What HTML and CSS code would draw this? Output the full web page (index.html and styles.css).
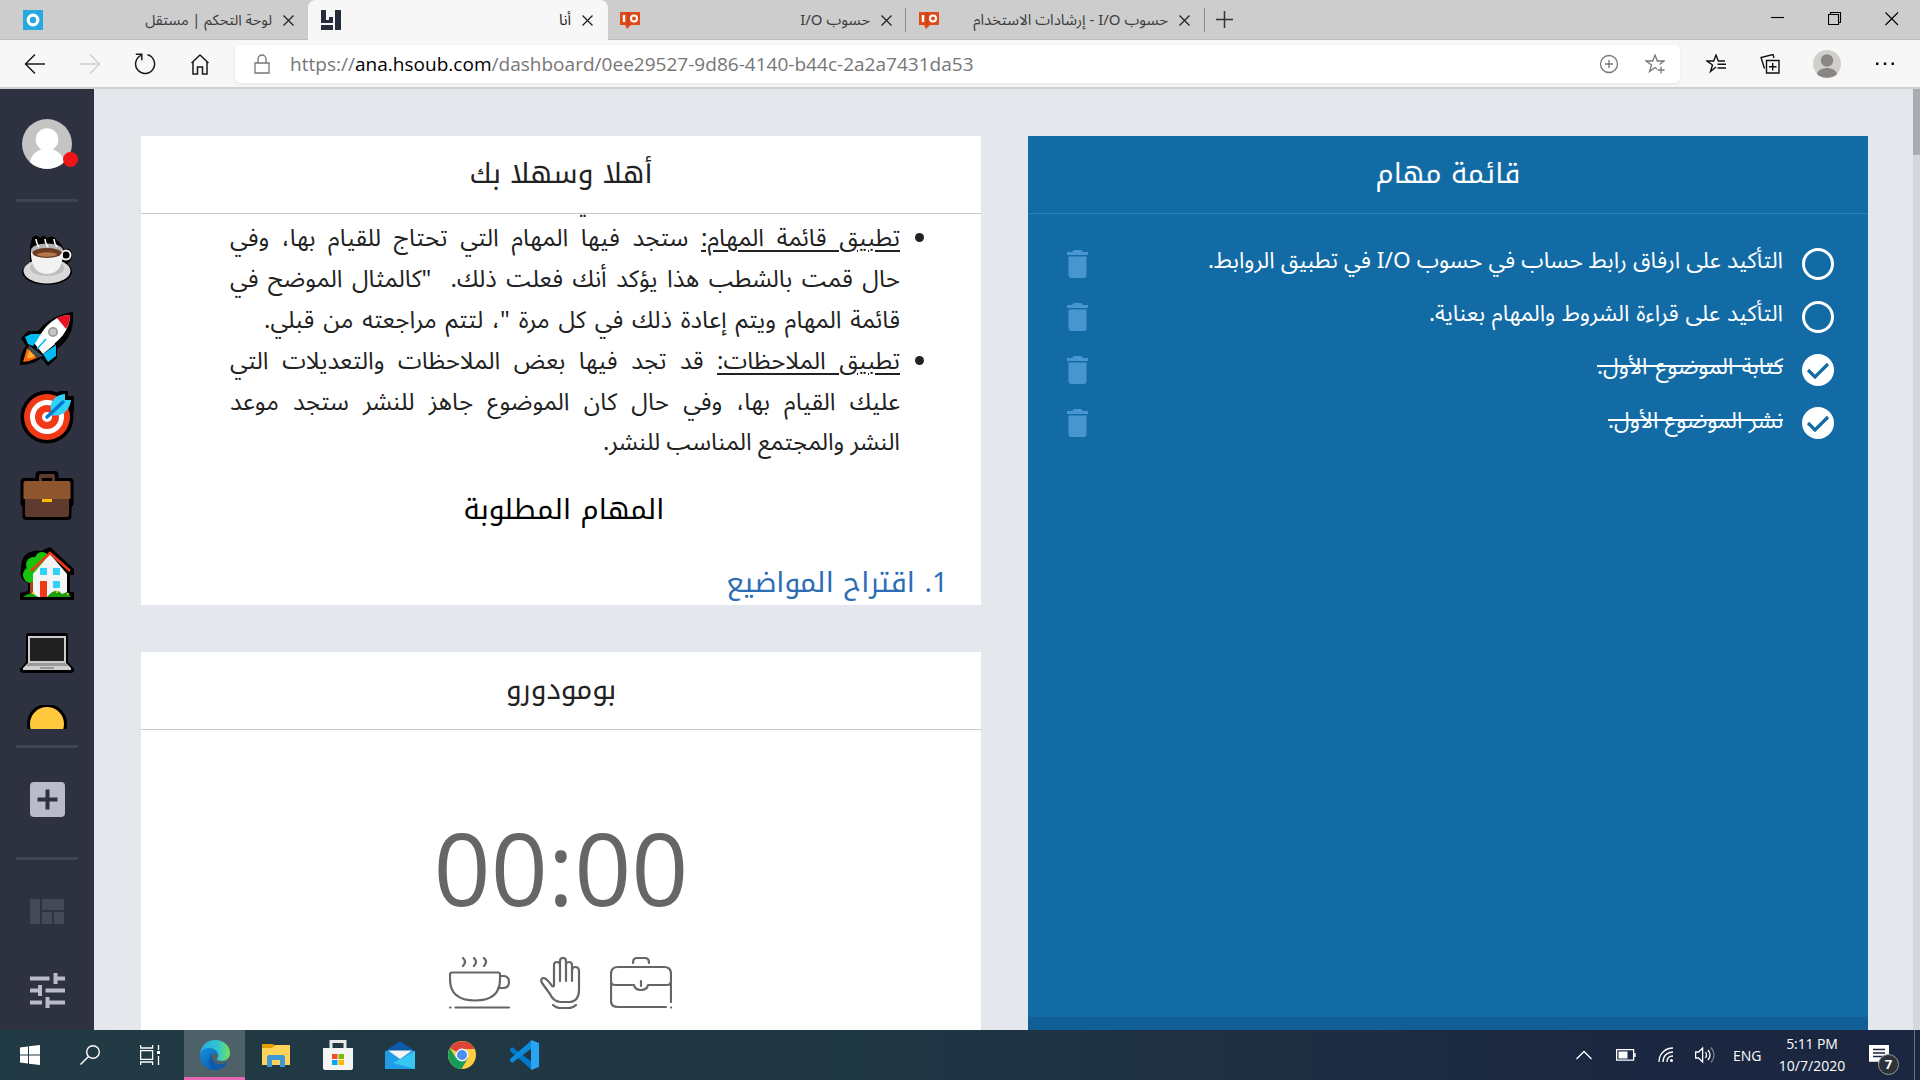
FILE: index.html
```html
<!DOCTYPE html>
<html lang="ar">
<head>
<meta charset="utf-8">
<title>أنا</title>
<link rel="stylesheet" href="styles.css">
</head>
<body>
<div class="screen">
  <header class="tabs">
    <div class="tab tab-first">
      <svg class="fav" viewBox="0 0 20 20"><path fill="#29a8e0" d="M0 0h20v20H0z"/><circle cx="10" cy="10" r="4.8" fill="none" stroke="#fff" stroke-width="3.2"/></svg>
      <span class="tab-title" dir="rtl">لوحة التحكم | مستقل</span>
      <svg class="x" viewBox="0 0 11 11"><path d="M.5.5l10 10M10.5.5l-10 10"/></svg>
    </div>
    <div class="tab tab-active">
      <svg class="fav" viewBox="0 0 20 20"><path fill="#272c3d" d="M0 0h5v13H0zM8 7h4v6H8zM0 10h8v3H0zM0 15h12v5H0zM14 0h6v20h-6z"/></svg>
      <span class="tab-title" dir="rtl">أنا</span>
      <svg class="x" viewBox="0 0 11 11"><path d="M.5.5l10 10M10.5.5l-10 10"/></svg>
    </div>
    <div class="tab tab-third">
      <svg class="fav" viewBox="0 0 20 20"><path fill="#df4a1b" d="M0 2h20v13h-9l-4 4-2-4H0z"/><path d="M4 5v7" stroke="#fff" stroke-width="2.4"/><path d="M8 2v13" stroke="#b93a12"/><circle cx="14" cy="8.5" r="3" fill="none" stroke="#fff" stroke-width="2"/></svg>
      <span class="tab-title" dir="rtl">حسوب I/O</span>
      <svg class="x" viewBox="0 0 11 11"><path d="M.5.5l10 10M10.5.5l-10 10"/></svg>
    </div>
    <div class="tab tab-fourth">
      <svg class="fav" viewBox="0 0 20 20"><path fill="#df4a1b" d="M0 2h20v13h-9l-4 4-2-4H0z"/><path d="M4 5v7" stroke="#fff" stroke-width="2.4"/><path d="M8 2v13" stroke="#b93a12"/><circle cx="14" cy="8.5" r="3" fill="none" stroke="#fff" stroke-width="2"/></svg>
      <span class="tab-title" dir="rtl">حسوب I/O - إرشادات الاستخدام</span>
      <svg class="x" viewBox="0 0 11 11"><path d="M.5.5l10 10M10.5.5l-10 10"/></svg>
    </div>
    <svg class="plus" viewBox="0 0 17 17"><path d="M8.5 0v17M0 8.5h17"/></svg>
    <div class="window-buttons">
      <svg viewBox="0 0 14 14"><path d="M0 5.5h13"/></svg>
      <svg viewBox="0 0 14 14"><path d="M.5 2.5h10v10H.5zM2.5 2.5v-2h10v10h-2"/></svg>
      <svg viewBox="0 0 14 14"><path d="M.5.5l12.5 12.5M13 .5L.5 13"/></svg>
    </div>
  </header>

  <div class="toolbar">
    <nav class="nav">
      <svg viewBox="0 0 22 22"><path d="M21 11H1.500M11 1.500L1.500 11 11 20.500"/></svg>
      <svg class="faded" viewBox="0 0 22 22"><path d="M1 11h19.500M11 1.500l9.500 9.500L11 20.500"/></svg>
      <svg viewBox="0 0 22 22"><path d="M13.500 1.800A9.500 9.500 0 1 1 7 2.400M1.800 1.200h6v6"/></svg>
      <svg viewBox="0 0 22 22"><path d="M2.500 10L11 2l8.500 8M4 9v12h4.500v-7h5v7H18V9"/></svg>
    </nav>
    <div class="address">
      <svg class="lock" viewBox="0 0 16 20"><path d="M1 9h14v10H1zM4 9V5a4 4 0 0 1 8 0v4"/></svg>
      <span class="url">https://<b>ana.hsoub.com</b>/dashboard/0ee29527-9d86-4140-b44c-2a2a7431da53</span>
      <svg class="addr-icon" viewBox="0 0 20 20"><circle cx="10" cy="10" r="8.500"/><path d="M10 6v8M6 10h8"/></svg>
      <svg class="addr-icon" viewBox="0 0 20 20"><path d="M12 15l-2-1.500-5.500 4 2-6.500L1 7h6.700L10 1l2.300 6H19l-4.500 3.500M16 12.500v7M12.500 16h7"/></svg>
    </div>
    <div class="actions">
      <svg viewBox="0 0 20 20"><path d="M10 13l-5.500 4.500 2-6.500L1 7h6.700L10 1l2.300 6H19M11.500 10.300H20M11.500 14H20"/></svg>
      <svg viewBox="0 0 20 20"><path d="M6.500 6.500h12.500v12.500H6.500zM12.700 9v7.500M9 12.700h7.500M4.500 14.500L1 3.500l12-3 1 3.500"/></svg>
      <svg class="person" viewBox="0 0 28 28"><circle cx="14" cy="14" r="14" fill="#d1cfcc"/><circle cx="14" cy="10.500" r="6.200" fill="#8a8683"/><path d="M4 24c2-8 18-8 20 0-4 5-16 5-20 0z" fill="#8a8683"/></svg>
      <svg viewBox="0 0 20 20"><path fill="#111" stroke="none" d="M1 8.500h2.500V11H1zM8.800 8.500h2.500V11H8.800zM16.500 8.500H19V11h-2.500z"/></svg>
    </div>
  </div>

  <div class="page">
    <aside class="side">
      <div class="user">
        <svg viewBox="0 0 50 50"><circle cx="25" cy="25" r="25" fill="#c4c4c4"/><circle cx="25" cy="20.500" r="11.300" fill="#fff"/><path d="M8 43c3-18 31-18 34 0-8 9-26 9-34 0z" fill="#fff"/></svg>
        <i class="status"></i>
      </div>
      <hr>
      <div class="boards">
        <svg viewBox="0 0 54 54"><path d="M12 5q4-5 8 0 4-4 7 0 5-3 8 0 5 4 9 11 9-2 8 7-1 5-5 8 5 3 5 8c-2 17-48 17-50 0q0-5 8-9V14z" fill="#000"/><ellipse cx="27" cy="38" rx="23.500" ry="12.500" fill="#d9d9d9"/><ellipse cx="27" cy="35" rx="17" ry="8" fill="#bfbfbf"/><circle cx="46" cy="22" r="4.500" fill="none" stroke="#eee" stroke-width="2"/><path d="M11 17q-1 23 16 24 17-1 16-24z" fill="#f2f2f2"/><ellipse cx="27" cy="17.500" rx="16" ry="7" fill="#b5b5b5"/><ellipse cx="27" cy="20" rx="14.500" ry="5" fill="#6b3d25"/><ellipse cx="27" cy="21.500" rx="10" ry="2.200" fill="#b5774b"/><path d="M16 6q0 4 3 8M25 6q0 4 3 8M34 6q0 4 3 8" stroke="#fff" stroke-width="1.600" fill="none"/></svg>
        <svg viewBox="0 0 54 54"><path d="M53 0q1 15-4 24-5 8-12 13v9l-9 8-7-8q-7 7-21 7 0-12 6-19l-5-8 7-7h10Q31 3 53 0z" fill="#000"/><path d="M25 18L14 31l9 11 12-10z" fill="#fff"/><path d="M5 25l6-3h11l-9 12-5-2zM36 33v11l-8 6-5-8z" fill="#00bcf2"/><path d="M16 31C23 15 35 3 50 3c0 15-10 26-26 36z" fill="#fff"/><path d="M37 6q5-3 13-3 0 8-4 14z" fill="#e81123"/><circle cx="33" cy="20" r="5" fill="#999"/><circle cx="33" cy="20" r="3.300" fill="#c6c6c6"/><path d="M9 33l14 11-6 2-9-9z" fill="#3e4b4e"/><path d="M7 36L3 50q8-1 14-4z" fill="#f7630c"/><path d="M9 38l6 6q-3 3-8 2z" fill="#ffb02e"/><path d="M26 27L17 37" stroke="#00bcf2" stroke-width="1.600"/></svg>
        <svg viewBox="0 0 54 54"><circle cx="27" cy="27" r="26.500" fill="#000"/><path d="M28 8l12-7h8v5h6v16L40 29z" fill="#000"/><circle cx="27" cy="27" r="23" fill="#f03a17"/><circle cx="27" cy="27" r="14.500" fill="none" stroke="#fff" stroke-width="5"/><circle cx="27" cy="27" r="5" fill="#fff"/><path d="M31 22c-2-12 5-17 14-18v6h6c-1 8-7 18-20 15z" fill="#31d2f7"/><path d="M43 12L27 27" stroke="#0078d7" stroke-width="3.500" stroke-linecap="round"/></svg>
        <svg viewBox="0 0 54 54"><rect x="15.500" y="2" width="23" height="16" rx="4" fill="#000"/><rect x=".5" y="9" width="53" height="29" rx="4" fill="#000"/><rect x="2.500" y="22" width="49" height="29" rx="4" fill="#000"/><path d="M19 12V7q0-2 2-2h12q2 0 2 2v5h-3V9H22v3z" fill="#5f3a2e"/><path d="M5 29h44v17q0 2-2 2H7q-2 0-2-2z" fill="#5f3a2e"/><path d="M3.500 14q0-2 2-2h43q2 0 2 2v16h-47z" fill="#8e562e"/><path d="M22 30h10v3H22z" fill="#ffb900"/></svg>
        <svg viewBox="0 0 54 54"><path d="M30 0l24 22v6h-4v17h4v8H0v-7l8-2V36Q-2 32 1 22 1 2 21 4z" fill="#000"/><g fill="#16c60c"><circle cx="11" cy="28" r="8"/><circle cx="14" cy="18" r="8"/><circle cx="22" cy="12" r="7"/></g><path d="M10 35h5v15h-5z" fill="#a5491d"/><path d="M13 27L30 7l17 20v23H13z" fill="#f4f4f4"/><path d="M11 24L30 6l20 18" stroke="#f03a17" stroke-width="2.500" fill="none"/><path d="M20 21h7v7h-7zM33 21h7v7h-7zM33 34h7v7h-7z" fill="#31d2f7"/><path d="M20 34h7v16h-7z" fill="#f03a17"/><path d="M3 50q8-7 15 0zM27 50q9-11 15-3l5-2 4 5z" fill="#16a00c"/><path d="M12 45h2v2h-2zM36 44h2v2h-2zM47 46h2v2h-2z" fill="#f7b50c"/></svg>
        <svg viewBox="0 0 54 54"><path d="M6 10q0-3 3-3h36q3 0 3 3v26l6 7q1 4-4 4H4q-5 0-4-4l6-7z" fill="#000"/><path d="M8 10h38v27H8z" fill="#ccc"/><path d="M10 12h34v23H10z" fill="#212121"/><path d="M8 37h38l5 5v2H3v-2z" fill="#d0d0d0"/><path d="M9 37h36l3 3H6zM20 41h14v2H20z" fill="#999"/></svg>
        <svg viewBox="0 0 54 54"><circle cx="27" cy="19" r="20" fill="#000"/><circle cx="27" cy="19" r="17" fill="#ffc83d"/></svg>
      </div>
      <hr>
      <svg class="add" viewBox="0 0 35 35"><rect width="35" height="35" rx="4" fill="#b9bcc8"/><path d="M17.500 7.500v20M7.500 17.500h20" stroke="#2d3140" stroke-width="4"/></svg>
      <hr>
      <svg class="layout" viewBox="0 0 34 25"><path fill="#454955" d="M0 0h10v25H0zM12 0h22v11H12zM12 13h10v12H12zM24 13h10v12H24z"/></svg>
      <svg class="sliders" viewBox="0 0 35 35"><path d="M0 5.500h19.500M25.500 0v11M25.500 5.500H35M0 17.500h10M10 12v11M15.500 17.500H35M0 29.500h12M17.500 24v11M17.500 29.500H35" stroke="#b9bcc8" stroke-width="4"/></svg>
    </aside>

    <main class="board">
      <div class="column">
        <section class="card welcome">
          <h2 dir="rtl"><span>أهلا وسهلا بك</span></h2>
          <div class="copy" dir="rtl">
            <p class="above">ي</p>
            <ul>
              <li><p class="row"><u>تطبيق قائمة المهام:</u> ستجد فيها المهام التي تحتاج للقيام بها، وفي</p>
                <p class="row">حال قمت بالشطب هذا يؤكد أنك فعلت ذلك.&nbsp; "كالمثال الموضح في</p>
                <p class="row row-c">قائمة المهام ويتم إعادة ذلك في كل مرة "، لتتم مراجعته من قبلي.</p></li>
              <li><p class="row"><u>تطبيق الملاحظات:</u> قد تجد فيها بعض الملاحظات والتعديلات التي</p>
                <p class="row">عليك القيام بها، وفي حال كان الموضوع جاهز للنشر ستجد موعد</p>
                <p class="row row-f">النشر والمجتمع المناسب للنشر.</p></li>
            </ul>
            <h3>المهام المطلوبة</h3>
            <h4>1. اقتراح المواضيع</h4>
          </div>
        </section>
        <section class="card pomodoro">
          <h2 dir="rtl"><span>بومودورو</span></h2>
          <div class="clock">00:00</div>
          <div class="modes">
            <svg class="mode-wide" viewBox="0 0 62 52"><path d="M3 15.500h46q2 0 2 2v5q0 21-25 21T1 22.500v-5q0-2 2-2zM51 19h3q6 0 6 6t-6 6h-5M14 1q4 4 0 8M25 1q4 4 0 8M35 1q4 4 0 8M6.500 50.500H60M1 50.500h.5"/></svg>
            <svg class="mode-hand" viewBox="0 0 41 52"><path d="M14 24V8q0-3 3-3t3 3V4q0-3 3-3t3 3v3q1-2 3-2 3 0 3 3v5q1-3 3-3 4 0 4 4v19q0 11-9 12H20q-7-1-10-8L2 26q-2-4 1-5 3 0 5 3 3 3 4 5 2 1 2-1V24M20 8v16M26 6v18M32 11v13M13 48q3 3 7 3h9q4 0 7-3"/></svg>
            <svg class="mode-wide" viewBox="0 0 62 52"><path d="M61 45V17q0-7-7-7H8q-7 0-7 7v27q0 6 7 6h48M61 50.500h.2M1 24q0 4 4 4h19q1 5 7 5t7-5h19q4 0 4-4M31 24v5M23 6q0-5 4-5h8q4 0 4 5"/></svg>
          </div>
        </section>
      </div>
      <section class="card tasks">
        <h2 dir="rtl"><span>قائمة مهام</span></h2>
        <ul dir="rtl">
          <li><i class="ring"></i><span class="task t1">التأكيد على ارفاق رابط حساب في حسوب I/O في تطبيق الروابط.</span><svg class="bin" viewBox="0 0 21 28"><path d="M0 2h5l2-2h7l2 2h5v3H0zM1.500 6.500h18V25q0 3-3 3h-12q-3 0-3-3z"/></svg></li>
          <li><i class="ring"></i><span class="task t2">التأكيد على قراءة الشروط والمهام بعناية.</span><svg class="bin" viewBox="0 0 21 28"><path d="M0 2h5l2-2h7l2 2h5v3H0zM1.500 6.500h18V25q0 3-3 3h-12q-3 0-3-3z"/></svg></li>
          <li><svg class="check" viewBox="0 0 32 32"><circle cx="16" cy="16" r="16" fill="#fff"/><path d="M6 16l7 7L26 10" fill="none" stroke="#136ba6" stroke-width="3.200"/></svg><span class="task done t3">كتابة الموضوع الأول.</span><svg class="bin" viewBox="0 0 21 28"><path d="M0 2h5l2-2h7l2 2h5v3H0zM1.500 6.500h18V25q0 3-3 3h-12q-3 0-3-3z"/></svg></li>
          <li><svg class="check" viewBox="0 0 32 32"><circle cx="16" cy="16" r="16" fill="#fff"/><path d="M6 16l7 7L26 10" fill="none" stroke="#136ba6" stroke-width="3.200"/></svg><span class="task done t4">نشر الموضوع الأول.</span><svg class="bin" viewBox="0 0 21 28"><path d="M0 2h5l2-2h7l2 2h5v3H0zM1.500 6.500h18V25q0 3-3 3h-12q-3 0-3-3z"/></svg></li>
        </ul>
        <div class="tasks-foot"></div>
      </section>
    </main>
    <div class="scroll"><i></i></div>
  </div>

  <footer class="taskbar">
    <div class="apps">
      <span><svg width="20" height="20" viewBox="0 0 20 20"><path fill="#fff" d="M0 2.500L8 1.400v8.200H0zM9 1.200L20 0v9.600H9zM0 10.500h8v8L0 17.500zM9 10.500h11V20L9 18.700z"/></svg></span>
      <span><svg width="20" height="20" viewBox="0 0 20 20" fill="none" stroke="#fff" stroke-width="1.400"><circle cx="13" cy="7" r="6.300"/><path d="M8.500 11.500L.5 19.500"/></svg></span>
      <span><svg width="20" height="20" viewBox="0 0 20 20" fill="none" stroke="#fff" stroke-width="1.300"><path d="M.6 0v3h12V0M.6 5.600h12v8.800H.6zM.6 20v-3h12v3M18.500 0v5M18.500 11v9"/><path d="M17 6h3v3h-3z" fill="#fff" stroke="none"/></svg></span>
      <span class="current"><svg width="30" height="30" viewBox="0 0 30 30"><defs><linearGradient id="eg" x1="0" x2="1"><stop stop-color="#2aa9e8"/><stop offset=".6" stop-color="#31c4cf"/><stop offset="1" stop-color="#72e35c"/></linearGradient><linearGradient id="eb" x1="0" y1="0" x2="1" y2="1"><stop stop-color="#1490df"/><stop offset="1" stop-color="#0c4b9c"/></linearGradient></defs><path fill="url(#eg)" d="M0 13C2 4 8 0 15 0c9 0 15 6 15 13 0 5-4 8-8 8-3 0-5-1-5-2s2-2 1-4c-1-3-5-5-9-5s-7 1-9 3z"/><path fill="url(#eb)" d="M0 14c1-4 5-6 9-6 5 0 9 3 9 7-4-3-8 0-7 4 1 5 7 8 16 3-3 6-8 8-13 8C6 30-1 23 0 14z"/><path fill="#0d5bad" d="M12 14c-5 5-3 13 2 16 5 0 10-2 13-7-8 4-16 0-15-9z"/></svg></span>
      <span><svg width="28" height="24" viewBox="0 0 28 24"><path fill="#e19d00" d="M0 1h11l2 2v4H0z"/><path fill="#ffd25a" d="M0 5h10l3-3h15v20H0z"/><path fill="#3f97d8" d="M5 14q0-2 2-2h14q2 0 2 2v10h-5v-7h-8v7H5z"/></svg></span>
      <span><svg width="30" height="30" viewBox="0 0 30 30"><path d="M8 9V1.500h14V9" fill="none" stroke="#e8e8e8" stroke-width="3"/><path fill="#f4f4f4" d="M0 8h30v20q0 2-2 2H2q-2 0-2-2z"/><path fill="#f25022" d="M9 14h5.500v5H9z"/><path fill="#7fba00" d="M15.500 14H21v5h-5.500z"/><path fill="#00a4ef" d="M9 20h5.500v5H9z"/><path fill="#ffb900" d="M15.500 20H21v5h-5.500z"/></svg></span>
      <span><svg width="30" height="28" viewBox="0 0 30 28"><path fill="#0b5aa9" d="M0 10L15 0l15 10v4H0z"/><path fill="#1f9de6" d="M0 10h30v18H0z"/><path fill="#37c5f3" d="M30 10L8 22l22 6z"/><path fill="#f5f5f5" d="M3 9.500h24L15 18z"/></svg></span>
      <span><svg width="28" height="28" viewBox="0 0 28 28"><circle cx="14" cy="14" r="14" fill="#ffcd40"/><path fill="#db4437" d="M14 14L2 7A14 14 0 0 1 26.500 8H14z"/><path fill="#169c5a" d="M2 7a14 14 0 0 0 11.500 21L20 17l-12 0z"/><circle cx="14" cy="14" r="6.500" fill="#f4f4f4"/><circle cx="14" cy="14" r="5" fill="#4d8df5"/></svg></span>
      <span><svg width="30" height="30" viewBox="0 0 30 30"><path fill="#0078c8" d="M1 9l2-2 20 15v8L1 11z"/><path fill="#0b8bd9" d="M1 21l2 2L23 8V0L1 19z"/><path fill="#28a4f2" d="M22 0l8 3v24l-8 3z"/></svg></span>
    </div>
    <div class="tray">
      <svg width="16" height="10" viewBox="0 0 16 10"><path d="M.5 9L8 1.500 15.500 9"/></svg>
      <svg class="g-bat" width="20" height="12" viewBox="0 0 20 12"><path d="M.6.600h17v10.500H.6zM19 4v4"/><path d="M2.500 2.500h9v7h-9z" fill="#fff" stroke="none"/></svg>
      <svg class="g-wifi" width="16" height="16" viewBox="0 0 16 16"><path d="M1 15C1 7 7 1 15 1M5 15C5 9 9 5 15 5M9 15q0-6 6-6"/><circle cx="13.500" cy="13.500" r="1.500" fill="#fff" stroke="none"/></svg>
      <svg class="g-spk" width="20" height="18" viewBox="0 0 20 18"><path d="M.6 6h3l4-4v14l-4-4h-3zM10.500 6q2 3 0 6M13 4q4 5 0 10"/><path d="M16 1.500q6 7.500 0 15" stroke="#75808c"/></svg>
      <span class="lang">ENG</span>
      <div class="time"><span class="hour">5:11 PM</span><span>10/7/2020</span></div>
      <div class="note"><svg width="20" height="20" viewBox="0 0 20 20"><path fill="#fff" d="M0 0h20v16h-6l-4 4v-4H0z"/><path d="M4 4.500h12M4 8h12M4 11.500h12" stroke="#1b2740"/></svg><b>7</b></div>
      <i class="peek"></i>
    </div>
  </footer>
</div>
</body>
</html>
```
FILE: styles.css
```css
* { box-sizing: border-box; margin: 0; padding: 0; }
body { font-family: "Noto Sans", "Noto Sans Arabic", "Noto Kufi Arabic", "DejaVu Sans", sans-serif; background: #e4e7ec; overflow: hidden; }
.screen { width: 1920px; height: 1080px; display: grid; grid-template-rows: 40px 49px 941px 50px; }
svg { display: block; flex: none; }

.tabs { display: flex; background: #cdcdcd; box-shadow: inset 0 -1px #bdbdbd; align-items: stretch; }
.tab { display: flex; align-items: center; padding: 0 15px 0 13px; font-size: 15px; color: #3c3c3c; }
.tab-first { width: 308px; padding-left: 23px; padding-right: 14px; font-size: 14.600px; }
.tab-active { width: 300px; background: #f7f7f7; border-radius: 8px 8px 0 0; color: #222; }
.tab-third { width: 298px; padding-left: 12px; padding-right: 14px; }
.tab-fourth { width: 299px; padding-right: 15px; }
.tab-third, .tab-fourth { background: linear-gradient(#8b8b8b, #8b8b8b) right center / 1px 24px no-repeat; }
.fav { width: 20px; height: 20px; }
.tab-title { flex: 1; white-space: nowrap; }
.x { width: 11px; height: 11px; margin-left: 11px; fill: none; stroke: #222; stroke-width: 1.3; }
.plus { width: 17px; height: 17px; margin: 11px 0 0 11px; stroke: #333; stroke-width: 1.5; }
.window-buttons { margin-left: auto; padding: 12px 21px 0 0; display: flex; gap: 43px; }
.window-buttons svg { width: 14px; height: 14px; fill: none; stroke: #000; stroke-width: 1.1; }

.toolbar { display: flex; align-items: center; background: #f7f7f7; border-bottom: 2px solid #cfcfcf; }
.nav { width: 235px; display: flex; gap: 33px; padding-left: 24px; }
.nav svg { width: 22px; height: 22px; fill: none; stroke: #1a1a1a; stroke-width: 1.5; }
.nav .faded { stroke: #cfcfcf; }
.address { width: 1445px; height: 38px; border-radius: 5px; background: #fff; box-shadow: 0 1px 3px #e2e2e2; display: flex; align-items: center; padding: 0 15px 0 19px; }
.lock { width: 16px; height: 20px; margin-right: 20px; fill: none; stroke: #777; stroke-width: 1.3; }
.url { flex: 1; font: 19px "Open Sans", sans-serif; color: #767676; white-space: nowrap; letter-spacing: .02px; }
.url b { font-weight: 400; color: #000; }
.addr-icon { width: 20px; height: 20px; margin-left: 26px; fill: none; stroke: #777; stroke-width: 1.3; }
.actions { flex: 1; display: flex; align-items: center; justify-content: space-between; padding: 0 25px 0 26px; }
.actions svg { width: 20px; height: 20px; fill: none; stroke: #111; stroke-width: 1.4; }
.actions .person { width: 28px; height: 28px; stroke: none; }

.page { display: grid; grid-template-columns: 94px 1fr 7px; overflow: hidden; }
.side { background: #2d3140; display: flex; flex-direction: column; align-items: center; padding-top: 30px; }
.side hr { width: 62px; height: 3px; border: 0; background: #3f4557; flex: none; }
.user { position: relative; width: 50px; height: 50px; margin-bottom: 30px; }
.status { position: absolute; right: -6px; bottom: 2px; width: 15px; height: 15px; border-radius: 50%; background: #f01515; }
.boards { height: 496px; margin: 31px 0 16px; overflow: hidden; display: flex; flex-direction: column; gap: 24.600px; }
.boards svg { width: 54px; height: 54px; }
.add { width: 35px; height: 35px; margin: 34px 0 40px; }
.layout { width: 34px; height: 25px; margin: 39px 0 49px; }
.sliders { width: 35px; height: 35px; }

.board { display: grid; grid-template-columns: 840px 840px; gap: 47px; padding: 47px 0 0 47px; }
.column { display: flex; flex-direction: column; gap: 47px; }
.card { background: #fff; overflow: hidden; }
.card h2 { height: 78px; border-bottom: 1px solid #c9c9c9; display: flex; align-items: center; justify-content: center; font-family: "Noto Kufi Arabic", "Noto Sans", "Noto Sans Arabic", sans-serif; font-size: 28px; font-weight: 400; color: #222; padding-bottom: 1px; line-height: 60px; }
.welcome { height: 469px; }
.copy { height: 391px; overflow: hidden; padding: 0 34px 0 81px; color: #222; }
.above { width: 30px; height: 41px; line-height: 41px; margin-top: -38px; margin-right: 354px; font-size: 25px; }
.copy ul { padding-right: 47px; font-size: 24px; }
.row { width: 670px; height: 41px; line-height: 39px; white-space: nowrap; text-align: justify; text-align-last: justify; text-underline-offset: 4px; }
.row-c { width: 636px; }
.row-f { width: 297px; font-size: 23.700px; }
.copy h3, .copy h4 { font-family: "Noto Kufi Arabic", "Noto Sans", "Noto Sans Arabic", sans-serif; font-size: 28px; font-weight: 400; line-height: 52px; }
.copy h3 { margin: 21px 41px 0 0; text-align: center; color: #000; }
.copy h4 { margin-top: 21px; margin-right: -1px; color: #2c6db5; }

.pomodoro { height: 378px; }
.clock { height: 136px; margin-top: 69px; text-align: center; font: 100px/136px "Open Sans", sans-serif; color: #666; }
.modes { display: flex; justify-content: center; gap: 29px; margin: 22px 1px 0 0; }
.modes svg { fill: none; stroke: #666; stroke-width: 2.2; stroke-linecap: round; stroke-linejoin: round; height: 52px; }
.mode-wide { width: 62px; }
.mode-hand { width: 41px; }

.tasks { background: #136ba6; height: 894px; display: flex; flex-direction: column; }
.tasks h2 { color: #fff; border-color: #2583c4; flex: none; }
.tasks ul { list-style: none; padding: 23px 34px 0 39px; flex: 1; }
.tasks li { display: flex; align-items: center; height: 53.200px; }
.ring { width: 32px; height: 32px; border: 3px solid #fff; border-radius: 50%; flex: none; }
.check { width: 32px; height: 32px; }
.task { color: #fff; font-size: 22.600px; line-height: 32px; margin-right: 19px; padding-bottom: 7px; white-space: nowrap; text-align-last: justify; }
.done { text-decoration: line-through; }
.t1 { width: 575px; }
.t2 { width: 354px; }
.t3 { width: 186px; }
.t4 { width: 175px; }
.bin { width: 21px; height: 28px; fill: #4796cf; margin-right: auto; }
.tasks-foot { height: 13px; background: #125f98; }
.scroll { background: #d4d8dd; }
.scroll i { display: block; height: 66px; background: #a9acb2; }

.taskbar { background: linear-gradient(90deg, #223a44, #203744 45%, #1b2740 85%); display: flex; justify-content: space-between; color: #fff; }
.apps { display: flex; }
.apps span { width: 62px; display: flex; align-items: center; justify-content: center; }
.apps span:nth-child(-n+3) { width: 60px; }
.apps .current { width: 61px; margin-left: 4px; background: #4e6168; box-shadow: inset 0 -3px #e667b4; }
.tray { display: flex; align-items: center; font: 15px "Open Sans", sans-serif; }
.tray svg { fill: none; stroke: #fff; stroke-width: 1.3; }
.g-bat { margin-left: 24px; }
.g-wifi { margin-left: 22px; }
.g-spk { margin-left: 21px; }
.lang { width: 28px; margin-left: 18px; font-size: 14px; }
.time { width: 68px; margin-left: 17px; display: flex; flex-direction: column; align-items: center; line-height: 22px; font-size: 14px; }
.hour { letter-spacing: -.1px; }
.note { position: relative; width: 20px; height: 20px; margin-left: 23px; }
.note b { position: absolute; left: 9px; top: 9px; width: 21px; height: 21px; border: 1px solid #999; border-radius: 50%; background: #2d3138; text-align: center; font-size: 13px; line-height: 19px; }
.peek { width: 1px; height: 50px; margin-left: 25px; margin-right: 5px; background: #69717e; }
```
